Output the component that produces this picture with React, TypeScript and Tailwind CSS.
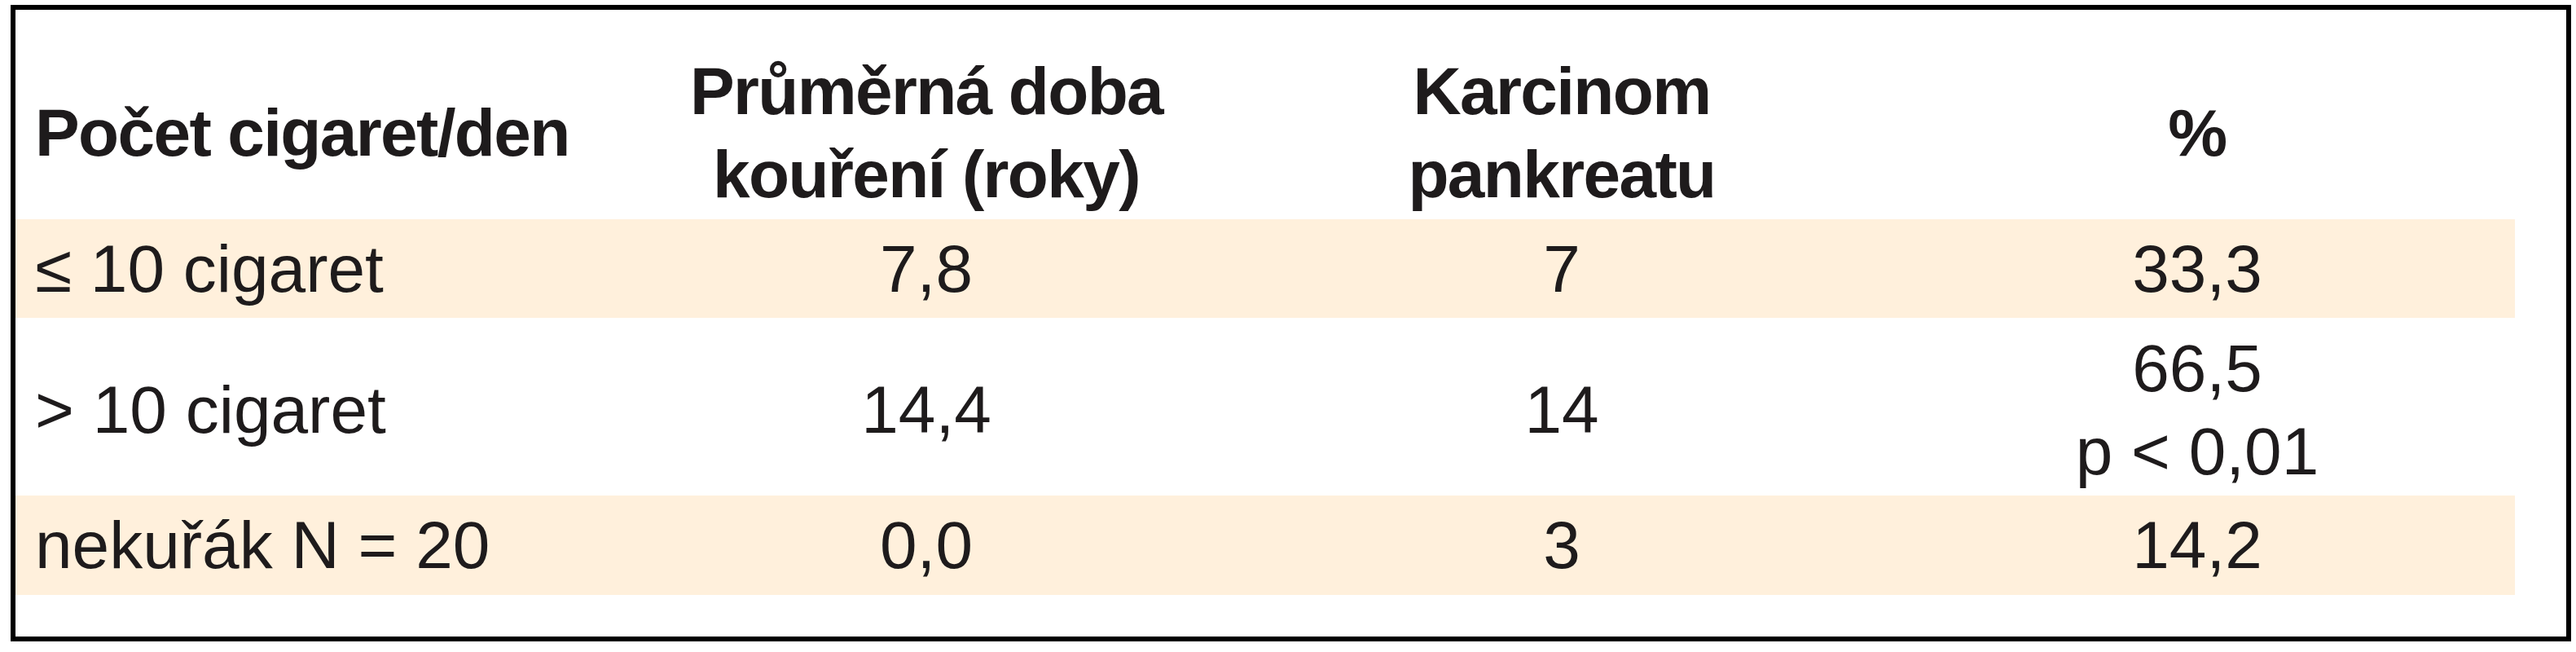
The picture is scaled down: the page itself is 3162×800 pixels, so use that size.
const rows = [
  { label: "≤ 10 cigaret", years: "7,8", cases: "7", pct: ["33,3"], shaded: true },
  { label: "> 10 cigaret", years: "14,4", cases: "14", pct: ["66,5", "p < 0,01"], shaded: false },
  { label: "nekuřák N = 20", years: "0,0", cases: "3", pct: ["14,2"], shaded: true },
];

export default function App() {
  return (
    <div className="bg-white w-[3162px] h-[800px] pt-[6px] pl-[13px] font-['Liberation_Sans',Arial,sans-serif] text-[#1e1b1c]">
      <div className="w-[3143px] h-[781px] border-[6px] border-black pr-[63px] pb-[50px]">
        {/* header */}
        <div className="grid grid-cols-[728px_1fr_1fr_1fr] h-[257px] pt-[49px] pb-[4px] text-[82px] leading-[102px] font-bold tracking-[-0.02em]">
          <div className="self-center pl-[24px] whitespace-nowrap">Počet cigaret/den</div>
          <div className="text-center whitespace-nowrap">
            Průměrná doba
            <br />
            kouření (roky)
          </div>
          <div className="text-center whitespace-nowrap">
            Karcinom
            <br />
            pankreatu
          </div>
          <div className="self-center text-center">%</div>
        </div>

        {/* body */}
        {rows.map((r, i) => (
          <div
            key={i}
            className={`grid grid-cols-[728px_1fr_1fr_1fr] text-[82px] leading-[102px] ${
              r.shaded ? "bg-[#fff0dc]" : "bg-white"
            } ${r.pct.length > 1 ? "h-[218px] pt-[11px] pb-[3px]" : i === 0 ? "h-[121px] pt-[10px] pb-[9px]" : "h-[122px] pt-[10px] pb-[10px]"}`}
          >
            <div className="self-center pl-[24px] whitespace-nowrap">{r.label}</div>
            <div className="self-center text-center">{r.years}</div>
            <div className="self-center text-center">{r.cases}</div>
            <div className="text-center whitespace-nowrap">
              {r.pct.map((p, j) => (
                <div key={j}>{p}</div>
              ))}
            </div>
          </div>
        ))}
      </div>
    </div>
  );
}
